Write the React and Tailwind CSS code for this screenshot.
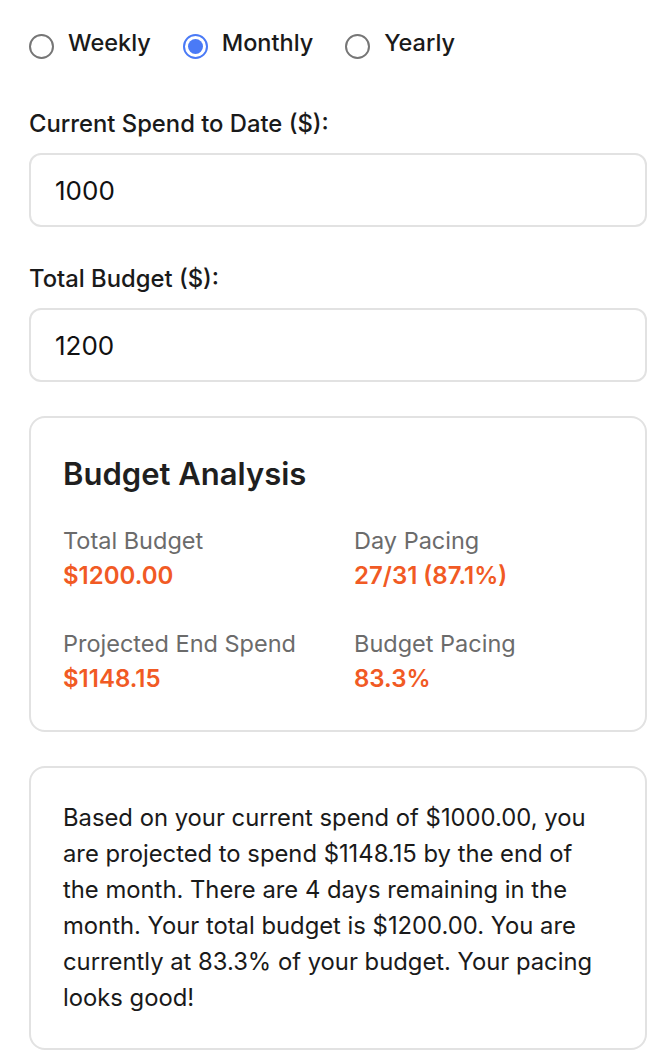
import React, { useState } from 'react';

const periods = ['Weekly', 'Monthly', 'Yearly'];

function Radio({ label, checked, onSelect }) {
  return (
    <label className="flex items-center gap-[14px] cursor-pointer" onClick={onSelect}>
      {checked ? (
        <span className="w-[25px] h-[25px] rounded-full border-[2px] border-[#4a7af6] flex items-center justify-center mt-[8px]">
          <span className="w-[15px] h-[15px] rounded-full bg-[#4a7af6]" />
        </span>
      ) : (
        <span className="w-[25px] h-[25px] rounded-full border-[2px] border-[#767676] mt-[8px]" />
      )}
      <span className="text-[23.5px] leading-[30px] font-medium text-[#1a1a1a]">{label}</span>
    </label>
  );
}

function Field({ label, value, onChange }) {
  return (
    <div className="flex flex-col">
      <span className="text-[23.8px] font-medium text-[#1a1a1a] leading-[30px]">{label}</span>
      <input
        type="text"
        value={value}
        onChange={(e) => onChange(e.target.value)}
        className="mt-[14px] h-[74px] w-full rounded-[12px] border-[2px] border-[#e2e2e2] px-[24px] text-[26px] text-[#111] outline-none"
      />
    </div>
  );
}

function Stat({ label, value }) {
  return (
    <div className="flex flex-col">
      <span className="text-[23.5px] text-[#6b6b6b] leading-[35px]">{label}</span>
      <span className="text-[24px] font-semibold text-[#f15a24] leading-[35px]">{value}</span>
    </div>
  );
}

export default function App() {
  const [period, setPeriod] = useState('Monthly');
  const [spend, setSpend] = useState('1000');
  const [budget, setBudget] = useState('1200');

  return (
    <div className="pl-[29px] pr-[17px] pt-[26px] pb-[14px] bg-white" style={{ fontFamily: 'Inter, "Noto Sans", sans-serif' }}>
      <div className="flex gap-[32px]">
        {periods.map((p) => (
          <Radio key={p} label={p} checked={period === p} onSelect={() => setPeriod(p)} />
        ))}
      </div>

      <div className="mt-[50px] flex flex-col gap-[37px]">
        <Field label="Current Spend to Date ($):" value={spend} onChange={setSpend} />
        <Field label="Total Budget ($):" value={budget} onChange={setBudget} />
      </div>

      <div className="mt-[34px] rounded-[16px] border-[2px] border-[#e2e2e2] px-[32px] pt-[36px] pb-[34px]">
        <h2 className="text-[31px] font-semibold text-[#1f1f1f] leading-[40px]">Budget Analysis</h2>
        <div className="mt-[29px] grid grid-cols-2 gap-x-[32px] gap-y-[33px]">
          <Stat label="Total Budget" value="$1200.00" />
          <Stat label="Day Pacing" value="27/31 (87.1%)" />
          <Stat label="Projected End Spend" value="$1148.15" />
          <Stat label="Budget Pacing" value="83.3%" />
        </div>
      </div>

      <div className="mt-[34px] rounded-[16px] border-[2px] border-[#e2e2e2] px-[32px] pt-[32px] pb-[32px]">
        <p className="text-[23.8px] leading-[36px] text-[#1a1a1a]">
          Based on your current spend of $1000.00, you are projected to spend $1148.15 by the end of the month. There are 4 days remaining in the month. Your total budget is $1200.00. You are currently at 83.3% of your budget. Your pacing looks good!
        </p>
      </div>
    </div>
  );
}
